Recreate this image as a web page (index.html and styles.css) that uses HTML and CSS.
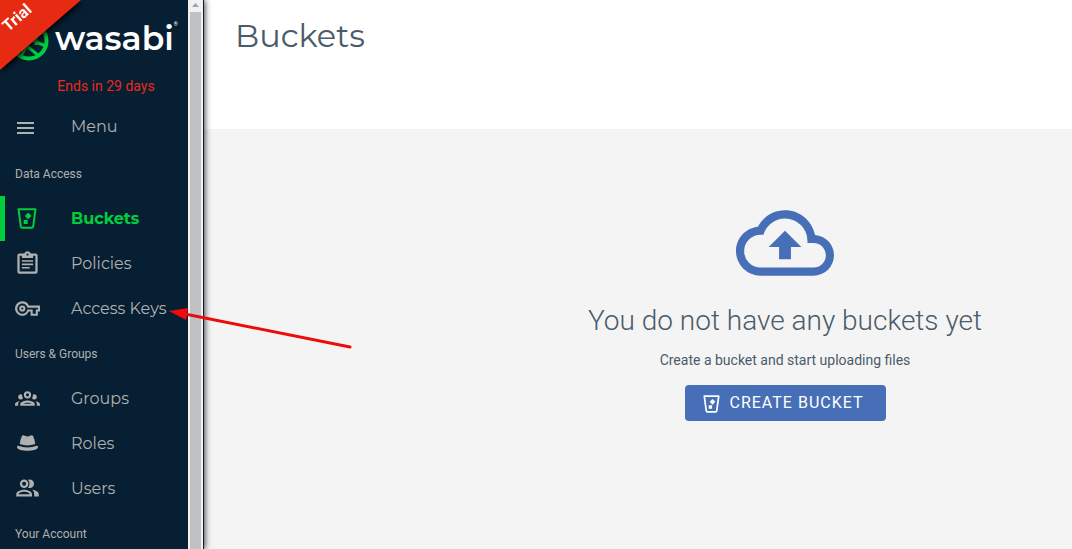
FILE: index.html
```html
<!DOCTYPE html>
<html lang="en">
<head>
<meta charset="utf-8">
<title>Buckets</title>
<link rel="stylesheet" href="styles.css">
</head>
<body>
<svg class="defs" aria-hidden="true">
  <symbol id="bucket" viewBox="0 0 20 21">
    <path fill="none" stroke="currentColor" stroke-width="2" stroke-linejoin="round" d="M1.5 1.2h17l-2.3 17.1q-.2 1.5-1.5 1.5H5.3q-1.300 0-1.500-1.500z"/>
    <path fill="currentColor" d="M11.200 4.500l3.300 3.400-3.300 3.400-3.400-3.400zM6.700 12h4v4h-4z"/>
  </symbol>
</svg>
<div class="app">
  <aside class="sidebar">
    <div class="panel">
      <div class="brand">
        <svg class="mark" viewBox="0 0 40 40" aria-hidden="true">
          <circle cx="20" cy="20" r="17.500" fill="none" stroke="#00ce3e" stroke-width="4"/>
          <path fill="none" stroke="#00ce3e" stroke-width="3" d="M4 27L36 10M11 36L30 7M22 19l15 6M18 25l12 10M27 12v12"/>
        </svg>
        <span class="wordmark">wasabi</span><span class="reg">®</span>
      </div>
      <div class="ribbon"><span class="ribbon-text">Trial</span></div>
      <p class="trial">Ends in 29 days</p>
      <button class="item menu" type="button">
        <svg class="icon small" viewBox="0 0 18 12" aria-hidden="true"><path fill="currentColor" d="M0 0h17v2H0zM0 5h17v2H0zM0 10h17v2H0z"/></svg>
        <span>Menu</span>
      </button>
      <nav>
        <h2 class="group">Data Access</h2>
        <a class="item active" href="#buckets"><svg class="icon"><use href="#bucket" x="3" y="3" width="20" height="21"/></svg><span>Buckets</span></a>
        <a class="item" href="#policies"><svg class="icon" viewBox="0 0 24 24"><path fill="currentColor" d="M19 3h-4.180C14.400 1.840 13.300 1 12 1s-2.400.840-2.820 2H5a2 2 0 0 0-2 2v14a2 2 0 0 0 2 2h14a2 2 0 0 0 2-2V5a2 2 0 0 0-2-2m-7 0a1 1 0 1 1 0 2 1 1 0 0 1 0-2M5 19V5h2v2h10V5h2v14zM7 9h10v1.500H7zm0 3h10v1.500H7zm0 3h7v1.500H7z"/></svg><span>Policies</span></a>
        <a class="item" href="#keys"><svg class="icon" viewBox="-1 -1 26 26"><path fill="currentColor" d="M7 5a7 7 0 1 0 6.300 10H15v4h7v-4h2V9H13.300A7 7 0 0 0 7 5m0 2.200c2.500 0 4.300 1.700 4.900 4H22v1.700h-2V17h-3v-4.100h-5.100A4.900 4.900 0 1 1 7 7.200M7 9a3 3 0 1 0 0 6 3 3 0 0 0 0-6m0 2a1 1 0 1 1 0 2 1 1 0 0 1 0-2"/></svg><span>Access Keys</span></a>
        <h2 class="group">Users &amp; Groups</h2>
        <a class="item" href="#groups"><svg class="icon" viewBox="-1 -1 26 26"><path fill="currentColor" d="M12 5a3.500 3.500 0 1 0 0 7 3.500 3.500 0 0 0 0-7m0 2a1.500 1.500 0 1 1 0 3 1.500 1.500 0 0 1 0-3M5.500 8a2.500 2.500 0 1 0 2.140 3.780A5.500 5.500 0 0 1 6.800 8.350 2.500 2.500 0 0 0 5.500 8m13 0a2.500 2.500 0 0 0-1.300.350 5.500 5.500 0 0 1-.840 3.430A2.500 2.500 0 1 0 18.500 8M12 14c-2.340 0-7 1.170-7 3.500V19h14v-1.500c0-2.330-4.660-3.500-7-3.500m-7.290.550C2.780 14.780 0 15.760 0 17.500V19h3v-1.930c0-1.010.690-1.850 1.710-2.520m14.580 0C20.310 15.220 21 16.060 21 17.070V19h3v-1.500c0-1.740-2.780-2.720-4.710-2.950M12 16c1.530 0 3.240.500 4.230 1H7.770c.990-.500 2.700-1 4.230-1"/></svg><span>Groups</span></a>
        <a class="item" href="#roles"><svg class="icon" viewBox="-1 -1 26 26"><path fill="currentColor" d="M6.500 5q1-1.500 3-.500 2.500 1.300 5 0 2-1 3 .500 1.500 3.300 2 7.500-7.500 2.800-15 0Q5 8.300 6.500 5M3 14.200q9 3.200 18 0 1.500-.300 1 1.700c-1 4.200-19 4.200-20 0q-.500-2 1-1.700"/></svg><span>Roles</span></a>
        <a class="item" href="#users"><svg class="icon" viewBox="0 0 24 24"><path fill="currentColor" d="M9 4a3.800 3.800 0 1 0 0 7.600A3.800 3.800 0 0 0 9 4m0 2a1.800 1.800 0 1 1 0 3.600A1.800 1.800 0 0 1 9 6m5-2q-.800 0-1.500.300 2.600 3.500 0 7 .700.300 1.500.300A3.800 3.800 0 0 0 14 4M9 13c-2.670 0-7 1.340-7 4v2h14v-2c0-2.660-4.330-4-7-4m0 1.900c2.970 0 5.100 1.460 5.100 2.100H3.900c0-.640 2.130-2.100 5.100-2.100m7.200-1.700Q18 14.600 18 17v2h4v-2c0-2.100-2.800-3.400-5.800-3.800"/></svg><span>Users</span></a>
        <h2 class="group">Your Account</h2>
      </nav>
    </div>
    <div class="scrollbar" aria-hidden="true"><div class="up"></div><div class="thumb"></div></div>
  </aside>
  <main class="main">
    <header class="top"><h1 class="title">Buckets</h1></header>
    <section class="empty">
      <svg class="cloud" viewBox="0 4 24 16" aria-hidden="true"><path fill="currentColor" d="M8 13h2.550v3h2.900v-3H16l-4-4M19.350 10.040C21.950 10.220 24 12.360 24 15a5 5 0 0 1-5 5H6a6 6 0 0 1-6-6C0 10.910 2.340 8.360 5.350 8.040 6.600 5.640 9.110 4 12 4c3.640 0 6.670 2.590 7.350 6.040M19 18a3 3 0 0 0 3-3c0-1.660-1.340-3-3-3h-1.500v-.500A5.500 5.500 0 0 0 12 6C9.500 6 7.370 7.690 6.710 10H6a4 4 0 0 0 0 8h13"/></svg>
      <h2 class="headline">You do not have any buckets yet</h2>
      <p class="hint">Create a bucket and start uploading files</p>
      <button class="create" type="button"><svg class="create-icon" aria-hidden="true"><use href="#bucket"/></svg>CREATE BUCKET</button>
    </section>
  </main>
</div>
<svg class="arrow" viewBox="0 0 184 44" aria-hidden="true"><path stroke="#ed0c0c" stroke-width="3" stroke-linecap="round" d="M16 7l165 33"/><path fill="#ed0c0c" d="M0 4L19 1 17 13z"/></svg>
</body>
</html>
```
FILE: styles.css
```css
* { box-sizing: border-box; }
body { margin: 0; font-family: Roboto, "Liberation Sans", sans-serif; color: #4b5b69; }
h1, h2, p { margin: 0; font-weight: 400; }
.defs { position: absolute; width: 0; height: 0; }
.app { display: flex; height: 100vh; overflow: hidden; }
.sidebar {
  position: relative;
  z-index: 1;
  display: flex;
  flex: none;
  width: 204px;
  background: #071f32;
  border-right: 1px solid #071f32;
  box-shadow: 1px 0 6px rgba(0, 0, 0, .75);
}
.panel { position: relative; flex: 1; overflow: hidden; color: #b0b0b0; }
.brand { display: flex; align-items: center; height: 76px; padding-left: 9px; }
.mark { flex: none; width: 40px; height: 40px; margin-top: 6px; }
.wordmark {
  margin-left: 6px;
  color: #fff;
  font: 600 33px/40px Montserrat, Quicksand, Lato, sans-serif;
}
.reg { align-self: flex-start; margin-top: 21px; color: #fff; font-size: 5px; }
.ribbon {
  position: absolute;
  top: 0;
  left: 0;
  filter: drop-shadow(1px 2px 3px #000);
}
.ribbon::before {
  content: "";
  display: block;
  width: 81px;
  height: 70px;
  background: #e62b12;
  clip-path: polygon(0 0, 100% 0, 0 100%);
}
.ribbon-text {
  position: absolute;
  top: 8px;
  left: 1px;
  color: #fff;
  font-size: 16px;
  font-weight: 700;
  line-height: 20px;
  transform: rotate(-41deg);
}
.trial { padding: 0 10px 0 34px; color: #e62b1e; font-size: 14px; line-height: 20px; text-align: center; }
.item {
  display: flex;
  align-items: center;
  gap: 30px;
  width: 100%;
  height: 45px;
  padding: 0 0 0 14px;
  border: 0;
  background: none;
  color: #b0b0b0;
  font: 400 16px/24px Montserrat, Inter, sans-serif;
  text-align: left;
  text-decoration: none;
  white-space: nowrap;
}
.icon { flex: none; width: 27px; height: 27px; }
.menu { margin: 8px 0 2px; }
.icon.small { width: 18px; height: 12px; margin: 2px 6px 0 3px; }
.active { padding-left: 9px; border-left: 5px solid #00ce3e; color: #00ce3e; font-weight: 700; }
.group { height: 45px; padding: 1px 0 0 15px; font-size: 12px; line-height: 45px; }
.scrollbar { flex: none; width: 15px; padding: 0 2px; background: #f1f1f1; }
.up { height: 12px; padding: 3px 2px 0; }
.up::before { content: ""; display: block; height: 4px; background: #a3a3a3; clip-path: polygon(50% 0, 100% 100%, 0 100%); }
.thumb { height: 100%; background: #c1c1c1; }
.main { display: flex; flex: 1; flex-direction: column; min-width: 0; }
.top { height: 129px; padding: 16px 31px; background: #fff; }
.title { color: #4b5b69; font: 400 32px/40px Montserrat, Inter, sans-serif; }
.empty {
  display: flex;
  flex: 1;
  flex-direction: column;
  align-items: center;
  padding: 81px 87px 0 381px;
  background: #f4f4f4;
  white-space: nowrap;
}
.cloud { flex: none; width: 98px; height: 66px; color: #466fb7; }
.headline { margin-top: 25px; font-size: 28px; font-weight: 300; line-height: 40px; }
.hint { margin-top: 9px; font-size: 14px; line-height: 20px; }
.create {
  display: flex;
  align-items: center;
  gap: 10px;
  height: 36px;
  margin-top: 15px;
  padding: 0 22px 0 18px;
  border: 0;
  border-radius: 4px;
  background: #466fb7;
  color: #fff;
  font: 400 16px/24px Roboto, sans-serif;
  letter-spacing: 1px;
}
.create-icon { width: 17px; height: 18px; margin-top: 2px; }
.arrow { position: absolute; z-index: 2; top: 307px; left: 169px; width: 184px; height: 44px; pointer-events: none; }
```
